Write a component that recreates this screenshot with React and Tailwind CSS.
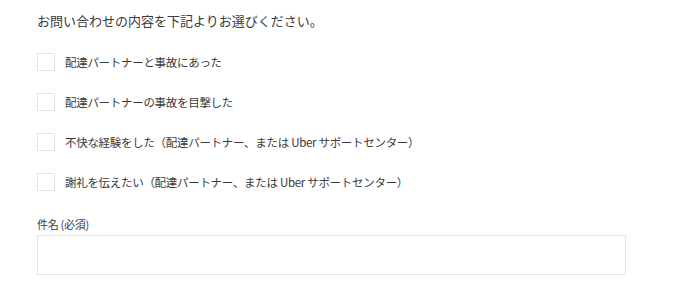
export default function App() {
  const items = [
    "配達パートナーと事故にあった",
    "配達パートナーの事故を目撃した",
    "不快な経験をした（配達パートナー、または Uber サポートセンター）",
    "謝礼を伝えたい（配達パートナー、または Uber サポートセンター）",
  ];
  return (
    <div
      className="w-[700px] h-[298px] bg-white text-[#3a3a3a] pl-[37px] pt-[12px]"
      style={{ fontFamily: '"Noto Sans CJK JP", "Noto Sans", sans-serif' }}
    >
      <div className="text-[13px] leading-[18px] tracking-[0px]">
        お問い合わせの内容を下記よりお選びください。
      </div>
      <div className="mt-[23px] flex flex-col gap-[22px]">
        {items.map((t) => (
          <div key={t} className="flex items-center h-[18px]">
            <div className="w-[18px] h-[18px] border border-[#e3e3e3] bg-white shrink-0" />
            <span className="ml-[10px] text-[11.5px] tracking-[-0.3px] leading-[18px]">{t}</span>
          </div>
        ))}
      </div>
      <div className="mt-[26px] text-[11px] leading-[14px] tracking-[-0.3px]">件名 (必須)</div>
      <div className="mt-[4px] w-[589px] h-[40px] border border-[#e3e3e3] bg-white" />
    </div>
  );
}
